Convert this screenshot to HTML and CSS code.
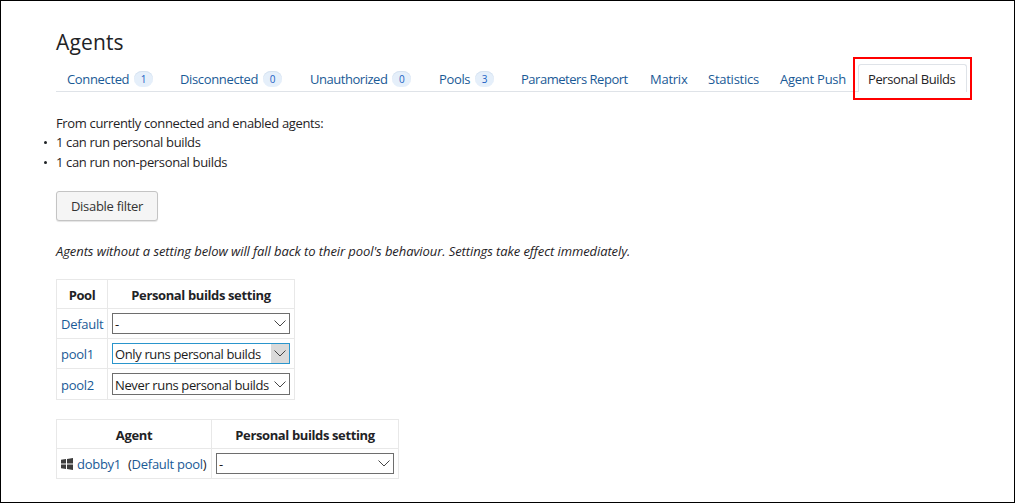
FILE: index.html
```html
<!DOCTYPE html>
<html lang="en">
<head>
<meta charset="utf-8">
<title>Agents</title>
<link rel="stylesheet" href="styles.css">
</head>
<body>
<main class="page">
  <h1 class="title">Agents</h1>
  <nav class="tabs">
    <a class="tab"><span>Connected</span><span class="badge">1</span></a>
    <a class="tab"><span>Disconnected</span><span class="badge">0</span></a>
    <a class="tab"><span class="tight">Unauthorized</span><span class="badge">0</span></a>
    <a class="tab"><span>Pools</span><span class="badge">3</span></a>
    <a class="tab"><span class="tight">Parameters Report</span></a>
    <a class="tab"><span class="wide">Matrix</span></a>
    <a class="tab"><span class="wide">Statistics</span></a>
    <a class="tab"><span class="wide">Agent Push</span></a>
    <a class="tab tab-active"><span>Personal Builds</span><span class="highlight"></span></a>
  </nav>
  <p class="intro">From currently connected and enabled agents:</p>
  <ul class="stats">
    <li>1 can run personal builds</li>
    <li>1 can run non-personal builds</li>
  </ul>
  <button class="btn"><span>Disable filter</span></button>
  <p class="note">Agents without a setting below will fall back to their pool's behaviour. Settings take effect immediately.</p>

  <div class="grid pools">
    <div class="head">Pool</div><div class="head">Personal builds setting</div>
    <div class="cell"><a class="link">Default</a></div>
    <div class="cell"><div class="select"><span>-</span><svg class="chev" viewBox="0 0 18 19"><path d="M3.5 6.5l5.5 5.5 5.5-5.5"/></svg></div></div>
    <div class="cell"><a class="link">pool1</a></div>
    <div class="cell"><div class="select focus"><span>Only runs personal builds</span><svg class="chev" viewBox="0 0 18 19"><path d="M3.5 6.5l5.5 5.5 5.5-5.5"/></svg></div></div>
    <div class="cell"><a class="link">pool2</a></div>
    <div class="cell"><div class="select tall"><span>Never runs personal builds</span><svg class="chev" viewBox="0 0 18 19"><path d="M3.5 6.5l5.5 5.5 5.5-5.5"/></svg></div></div>
  </div>

  <div class="grid agents">
    <div class="head">Agent</div><div class="head">Personal builds setting</div>
    <div class="cell"><svg class="win" viewBox="0 0 12 12"><path d="M0 1.7L5 1v4.5H0zM6 .9L12 0v5.5H6zM0 6.5h5V11L0 10.3zM6 6.5h6V12l-6-.9z"/></svg><a class="link">dobby1</a><span class="pool">(<a class="link">Default pool</a>)</span></div>
    <div class="cell"><div class="select"><span>-</span><svg class="chev" viewBox="0 0 18 19"><path d="M3.5 6.5l5.5 5.5 5.5-5.5"/></svg></div></div>
  </div>
</main>
</body>
</html>
```
FILE: styles.css
```css
* { box-sizing: border-box; }
body {
  margin: 0;
  background: #fff;
  color: #1f2326;
  font: 13px/20px "Open Sans", "Noto Sans", sans-serif;
  letter-spacing: -0.35px;
}
.page {
  height: 503px;
  padding: 28px 0 0 55px;
  border: 1px solid #000;
  overflow: hidden;
}
.title {
  margin: 0;
  font-size: 21px;
  font-weight: 400;
  line-height: 27px;
  letter-spacing: 0.15px;
}
.tabs {
  display: grid;
  grid-template-columns: 113px 130px 129px 82px 129px 58px 72px 89px 109px;
  width: 911px;
  height: 28px;
  margin-top: 8px;
  background: linear-gradient(#dfe3e8, #dfe3e8) 0 27px / 802px 1px no-repeat;
}
.tab {
  position: relative;
  display: flex;
  align-items: center;
  padding: 2px 0 0 11px;
  color: #1a5a96;
  white-space: nowrap;
}
.tight { letter-spacing: -0.47px; }
.wide { letter-spacing: -0.25px; }
.badge {
  width: 19px;
  height: 16px;
  margin: -1px 0 0 5px;
  border-radius: 8px;
  background: #e5effa;
  box-shadow: inset 0 1px #d5e2f0;
  color: #1b62c4;
  font-size: 10px;
  line-height: 17px;
  letter-spacing: 0;
  text-align: center;
}
.tab-active {
  padding: 1px 0 0 9px;
  border: 1px solid #dfe3e8;
  border-bottom: 0;
  border-radius: 3px 3px 0 0;
  color: #1f2326;
  letter-spacing: -0.4px;
}
.highlight {
  position: absolute;
  inset: -8px -6px -8px -6px;
  border: 2px solid #f00;
}
.intro { margin: 22px 0 0; line-height: 19px; }
.stats { margin: -1px 0 0; padding: 0; list-style: none; line-height: 20px; }
.stats li { display: flex; align-items: center; }
.stats li::before {
  content: "";
  width: 3px;
  height: 3px;
  margin: 1px 10px 0 -12px;
  border-radius: 50%;
  background: #1f2326;
}
.stats li::before { margin-right: 9px; }
.btn {
  display: block;
  width: 102px;
  height: 30px;
  margin: 19px 0 0;
  padding: 0;
  border: 1px solid #c4c4c4;
  border-radius: 3px;
  background: #f5f5f5;
  box-shadow: 0 1px 1px #e4e4e4;
  color: #333;
  font: inherit;
  letter-spacing: -0.3px;
}
.note {
  margin: 20px 0 0;
  font-style: italic;
  letter-spacing: -0.085px;
  white-space: nowrap;
}
.grid {
  display: grid;
  gap: 1px;
  padding: 1px;
  background: #e8e8e8;
}
.grid > div { background: #fff; }
.pools {
  width: 239px;
  margin-top: 18px;
  grid-template-columns: 50px 186px;
  grid-template-rows: 28px 29px 29px 30px;
}
.agents {
  width: 343px;
  margin-top: 19px;
  grid-template-columns: 154px 186px;
  grid-template-rows: 28px 29px;
}
.head {
  padding-top: 5px;
  font-weight: 700;
  line-height: 20px;
  letter-spacing: -0.38px;
  text-align: center;
}
.cell {
  display: flex;
  align-items: center;
  padding: 0 4px;
  white-space: nowrap;
}
.link { padding-top: 1px; color: #1a5a96; }
.select {
  display: flex;
  align-items: center;
  justify-content: space-between;
  width: 178px;
  height: 21px;
  padding-left: 2px;
  border: 1px solid #6e6e6e;
  color: #1b1b1b;
  letter-spacing: -0.37px;
}
.select span { padding-top: 1px; }
.tall { height: 22px; }
.focus { border-color: #2a95cc; }
.focus .chev { background: #dadada; }
.chev {
  flex: none;
  width: 18px;
  height: 19px;
  fill: none;
  stroke: #444;
  stroke-width: 1;
}
.win { width: 12px; height: 12px; margin: 0 4px 0 0; fill: #3c3c3c; }
.pool { margin-left: 7px; padding-top: 1px; letter-spacing: -0.28px; }
.pool, .cell > .link { letter-spacing: -0.27px; }
```
